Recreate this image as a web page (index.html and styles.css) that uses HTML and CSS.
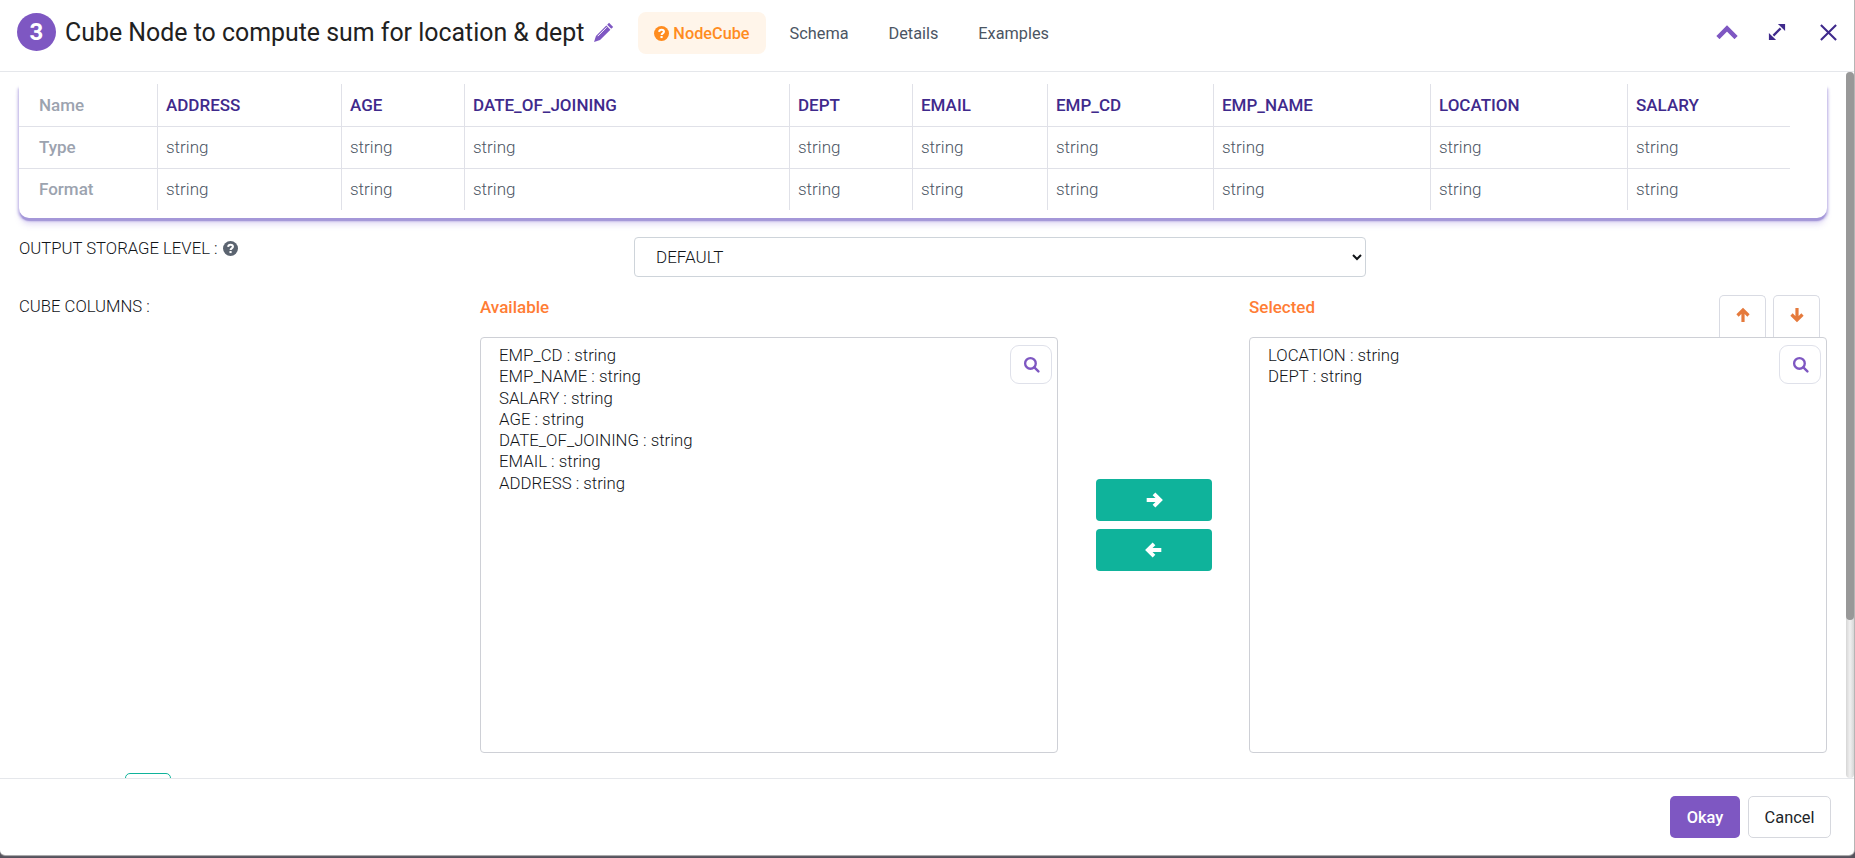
FILE: index.html
```html
<!DOCTYPE html>
<html lang="en">
<head>
<meta charset="utf-8">
<title>Cube Node</title>
<link rel="stylesheet" href="styles.css">
</head>
<body>
<div class="modal">
  <header class="header">
    <span class="step">3</span>
    <h1 class="title">Cube Node to compute sum for location &amp; dept</h1>
    <svg class="pencil" viewBox="0 0 20 20"><path d="M15.300.8 19.200 4.700 17.400 6.500 13.500 2.600zM12.700 3.400l3.900 3.900L6.700 17.200 1 19l1.800-5.700z"/><path class="pencil-cut" d="M4.500 13.500 13 5"/></svg>
    <nav class="tabs">
      <a class="tab tab-active">
        <svg class="help help-orange" viewBox="0 0 16 16"><circle cx="8" cy="8" r="8"/><path class="help-q" d="M5.500 6.200C5.600 4.700 6.700 4 8 4c1.500 0 2.600.9 2.600 2.100 0 1.800-2.500 1.800-2.500 3.500"/><rect class="help-dot" x="6.900" y="10.700" width="2.300" height="2.200"/></svg>NodeCube</a>
      <a class="tab">Schema</a>
      <a class="tab">Details</a>
      <a class="tab">Examples</a>
    </nav>
    <div class="win-actions">
      <svg class="win-up" viewBox="0 0 22 14"><path d="M3.500 11 11 3.500 18.500 11"/></svg>
      <svg class="win-expand" viewBox="0 0 20 20"><path class="win-line" d="M6 14 14 6"/><path class="win-head" d="M11 1h8v8zM1 11v8h8z"/></svg>
      <svg class="win-close" viewBox="0 0 20 20"><path d="M2 2 18 18M18 2 2 18"/></svg>
    </div>
  </header>

  <main class="content">
    <section class="card">
      <table class="schema">
        <colgroup>
          <col class="c-head"><col class="c-address"><col class="c-age"><col class="c-date"><col class="c-dept"><col class="c-email"><col class="c-cd"><col class="c-name"><col class="c-loc"><col class="c-sal">
        </colgroup>
        <tr>
          <th class="row-head">Name</th><th>ADDRESS</th><th>AGE</th><th>DATE_OF_JOINING</th><th>DEPT</th><th>EMAIL</th><th>EMP_CD</th><th>EMP_NAME</th><th>LOCATION</th><th>SALARY</th>
        </tr>
        <tr>
          <th class="row-head">Type</th><td>string</td><td>string</td><td>string</td><td>string</td><td>string</td><td>string</td><td>string</td><td>string</td><td>string</td>
        </tr>
        <tr>
          <th class="row-head">Format</th><td>string</td><td>string</td><td>string</td><td>string</td><td>string</td><td>string</td><td>string</td><td>string</td><td>string</td>
        </tr>
      </table>
    </section>

    <div class="storage">
      <label class="field-label storage-label">OUTPUT STORAGE LEVEL :
        <svg class="help help-grey" viewBox="0 0 16 16"><circle cx="8" cy="8" r="8"/><path class="help-q" d="M5.500 6.200C5.600 4.700 6.700 4 8 4c1.500 0 2.600.9 2.600 2.100 0 1.800-2.500 1.800-2.500 3.500"/><rect class="help-dot" x="6.900" y="10.700" width="2.300" height="2.200"/></svg>
      </label>
      <select class="storage-select"><option>DEFAULT</option></select>
    </div>

    <div class="cube">
      <div class="field-label cube-label">CUBE COLUMNS :</div>
      <div class="pick">
        <div class="pick-head"><span class="pick-title">Available</span></div>
        <div class="pick-box">
          <ul class="pick-list">
            <li>EMP_CD : string</li>
            <li>EMP_NAME : string</li>
            <li>SALARY : string</li>
            <li>AGE : string</li>
            <li>DATE_OF_JOINING : string</li>
            <li>EMAIL : string</li>
            <li>ADDRESS : string</li>
          </ul>
          <button class="search"><svg viewBox="0 0 16 16"><circle cx="7" cy="7" r="5"/><path d="M10.700 10.700 14.500 14.500"/></svg></button>
        </div>
      </div>
      <div class="transfer">
        <button class="move"><svg viewBox="0 0 16 16"><path d="M1.500 8h12M8 2.500 13.500 8 8 13.500"/></svg></button>
        <button class="move"><svg viewBox="0 0 16 16"><path d="M14.500 8h-12M8 2.500 2.500 8 8 13.500"/></svg></button>
      </div>
      <div class="pick pick-selected">
        <div class="pick-head">
          <span class="pick-title">Selected</span>
          <div class="order">
            <button class="order-btn"><svg viewBox="0 0 16 16"><path d="M8 15V3M2.500 8.500 8 3l5.500 5.500"/></svg></button>
            <button class="order-btn"><svg viewBox="0 0 16 16"><path d="M8 1v12M2.500 7.500 8 13l5.500-5.500"/></svg></button>
          </div>
        </div>
        <div class="pick-box">
          <ul class="pick-list">
            <li>LOCATION : string</li>
            <li>DEPT : string</li>
          </ul>
          <button class="search"><svg viewBox="0 0 16 16"><circle cx="7" cy="7" r="5"/><path d="M10.700 10.700 14.500 14.500"/></svg></button>
        </div>
      </div>
    </div>
    <button class="add-btn"></button>

    <div class="scrollbar"><div class="scroll-thumb"></div></div>
  </main>

  <footer class="footer">
    <button class="btn btn-okay">Okay</button>
    <button class="btn btn-cancel">Cancel</button>
  </footer>
</div>
</body>
</html>
```
FILE: styles.css
```css
* { box-sizing: border-box; }
html, body { height: 100%; }
body {
  margin: 0;
  overflow: hidden;
  background: #55525c;
  font-family: Roboto, "Liberation Sans", sans-serif;
  color: #212529;
}
button { font-family: inherit; cursor: pointer; }

.modal {
  width: 1854px;
  height: 855px;
  display: flex;
  flex-direction: column;
  background: #fff;
  border-radius: 0 0 5px 5px;
  box-shadow: 0 1px 1px #b5b5b5, 1px 0 0 #b5b5b5;
}

/* header */
.header {
  flex: none;
  height: 72px;
  display: flex;
  align-items: center;
  padding: 0 0 7px 17px;
  border-bottom: 1px solid #e5e7eb;
}
.step {
  width: 39px;
  height: 38px;
  flex: none;
  border-radius: 50%;
  background: #7e57c2;
  color: #fff;
  font-size: 24px;
  font-weight: 700;
  line-height: 38px;
  text-align: center;
}
.title {
  margin: 0 0 0 9px;
  font-size: 24.900px;
  font-weight: 400;
  color: #212121;
  white-space: nowrap;
}
.pencil { width: 21px; height: 21px; margin-left: 9px; fill: #7e57c2; flex: none; }
.pencil-cut { fill: none; stroke: #fff; stroke-width: .9; }
.tabs { display: flex; gap: 8px; margin: 2px 0 0 24px; }
.tab {
  height: 42px;
  padding: 0 16px;
  display: flex;
  align-items: center;
  font-size: 16.300px;
  color: #4b5563;
  border-radius: 8px;
}
.tab-active { background: #fff5ea; color: #ff8c1f; font-weight: 500; }
.help { width: 15px; height: 15px; flex: none; }
.help-orange { margin-right: 4px; fill: #ff8c1f; }
.help-grey { fill: #5b6470; vertical-align: -2px; margin-left: 1px; }
.help-q { fill: none; stroke: #fff; stroke-width: 2.200; }
.help-dot { fill: #fff; }
.win-actions { margin-left: auto; margin-right: 16px; display: flex; align-items: center; }
.win-up { width: 22px; height: 14px; fill: none; stroke: #7e57c2; stroke-width: 4.500; stroke-linecap: square; }
.win-expand { width: 18px; height: 18px; margin-left: 30px; }
.win-line { stroke: #3f2a8c; stroke-width: 2.500; }
.win-head { fill: #3f2a8c; }
.win-close { width: 19px; height: 19px; margin-left: 33px; fill: none; stroke: #3f2a8c; stroke-width: 2.200; }

/* scrolling content */
.content {
  flex: 1;
  min-height: 0;
  position: relative;
  overflow: hidden;
  padding: 12px 0 0 19px;
}
.scrollbar {
  position: absolute;
  top: 0;
  right: 0;
  bottom: 0;
  width: 8px;
  border-radius: 4px;
  background: linear-gradient(90deg, #d6d6d6, #f0f0f0 50%, #d6d6d6);
}
.scroll-thumb { height: 548px; border-radius: 4px; background: #989898; }

.card {
  width: 1808px;
  height: 134px;
  border-radius: 0 0 10px 10px;
  background: #fff;
  box-shadow: 0 4px 1px -1px #a497d8, 0 8px 6px -2px rgba(126, 100, 210, .25), -2px 3px 3px -1px rgba(110, 90, 200, .45), 2px 3px 3px -1px rgba(110, 90, 200, .45);
}
.schema { border-collapse: collapse; table-layout: fixed; width: 1771px; font-size: 17px; }
.c-head { width: 138px; }
.c-address { width: 184px; }
.c-age { width: 123px; }
.c-date { width: 325px; }
.c-dept { width: 123px; }
.c-email { width: 135px; }
.c-cd { width: 166px; }
.c-name { width: 217px; }
.c-loc { width: 197px; }
.c-sal { width: 163px; }
.schema tr + tr { border-top: 1px solid #e0e1e8; }
.schema th, .schema td {
  height: 42px;
  padding: 0 0 0 8.500px;
  text-align: left;
  border-left: 1px solid #e0e1e8;
}
.schema th { color: #3f2a8c; font-weight: 500; }
.schema td { color: #4b5563; font-weight: 300; }
.schema .row-head { border-left: 0; padding-left: 20px; color: #9ca3af; font-weight: 500; }

.field-label { font-size: 16.700px; font-weight: 300; color: #111418; }
.storage { display: flex; margin-top: 19px; height: 40px; }
.storage-label { width: 615px; padding-top: 2px; line-height: 20px; }
.storage-select {
  width: 732px;
  height: 40px;
  padding-left: 17px;
  border: 1px solid #ced4da;
  border-radius: 4px;
  background: #fff;
  color: #111418;
  font: 300 17px Roboto, sans-serif;
}

.cube { display: flex; margin-top: 18px; height: 458px; }
.cube-label { width: 461px; line-height: 24px; }
.pick { width: 578px; flex: none; }
.pick-head { height: 42px; display: flex; justify-content: space-between; }
.pick-title { font-size: 17px; font-weight: 500; line-height: 24px; color: #ff7d35; }
.order { display: flex; gap: 7px; margin-right: 7px; }
.order-btn {
  width: 47px;
  height: 42px;
  padding: 0;
  border: 1px solid #d9dbe3;
  border-bottom: 0;
  border-radius: 5px 5px 0 0;
  background: #fff;
}
.order-btn svg { width: 16px; height: 16px; fill: none; stroke: #e57a3c; stroke-width: 3.200; display: block; margin: 0 auto 3px; }
.pick-box {
  position: relative;
  height: 416px;
  border: 1px solid #ced0d6;
  border-radius: 4px;
  background: #fff;
}
.pick-list {
  list-style: none;
  margin: 0;
  padding: 7px 0 0 18px;
  font-size: 16.800px;
  font-weight: 300;
  line-height: 21.300px;
  color: #111418;
}
.search {
  position: absolute;
  top: 7px;
  right: 5px;
  width: 42px;
  height: 39px;
  padding: 0;
  border: 1px solid #dfe1ea;
  border-radius: 9px;
  background: #fff;
}
.search svg { width: 17px; height: 17px; display: block; margin: auto; fill: none; stroke: #7e57c2; stroke-width: 2.200; stroke-linecap: round; }
.transfer {
  width: 191px;
  flex: none;
  padding: 184px 0 0 1px;
  display: flex;
  flex-direction: column;
  align-items: center;
  gap: 8px;
}
.move {
  width: 116px;
  height: 42px;
  padding: 0;
  border: 0;
  border-radius: 4px;
  background: #0fb39b;
}
.move svg { width: 18px; height: 18px; display: block; margin: auto; fill: none; stroke: #fff; stroke-width: 3.400; }
.add-btn {
  display: block;
  width: 46px;
  height: 40px;
  margin: 20px 0 0 106px;
  border: 1px solid #0fb39b;
  border-radius: 5px;
  background: #fff;
}

/* footer */
.footer {
  flex: none;
  height: 77px;
  padding: 17px 23px 0 0;
  display: flex;
  justify-content: flex-end;
  align-items: flex-start;
  gap: 8px;
  border-top: 1px solid #e5e7eb;
}
.btn { height: 42px; padding: 0; border-radius: 5px; font-size: 16.400px; }
.btn-okay { width: 70px; border: 0; background: #7e57c2; color: #fff; font-weight: 500; }
.btn-cancel { width: 83px; border: 1px solid #d6d8de; background: #fff; color: #212529; }
```
